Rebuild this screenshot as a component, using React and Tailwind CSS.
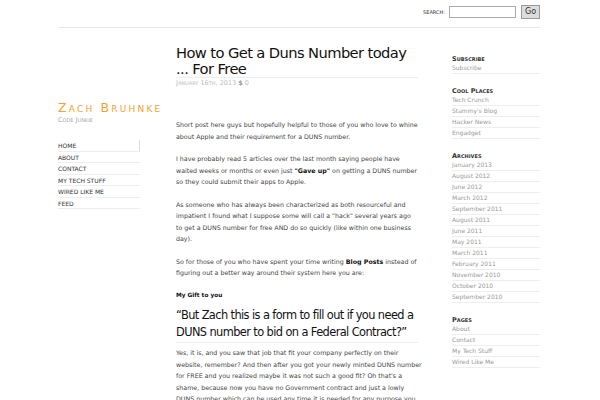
const SIDEBAR = [
  { title: 'Subscribe', items: ['Subscribe'] },
  { title: 'Cool Places', items: ['Tech Crunch', "Stammy's Blog", 'Hacker News', 'Engadget'] },
  {
    title: 'Archives',
    items: [
      'January 2013', 'August 2012', 'June 2012', 'March 2012', 'September 2011', 'August 2011',
      'June 2011', 'May 2011', 'March 2011', 'February 2011', 'November 2010', 'October 2010', 'September 2010',
    ],
  },
  { title: 'Pages', items: ['About', 'Contact', 'My Tech Stuff', 'Wired Like Me'] },
]

const NAV = ['Home', 'About', 'Contact', 'My Tech Stuff', 'Wired Like Me', 'Feed']

export default function App() {
  return (
    <div className="min-h-screen bg-white font-['DejaVu_Sans',sans-serif] text-[#444]">
      <div className="ml-[58px] w-[482px]">
        <header className="flex h-[28px] items-start justify-end border-b border-[#e6e6e6] pt-[5px]">
          <div className="flex items-center">
            <span className="mr-[4px] mt-[1px] text-[5px] uppercase text-[#333]">Search:</span>
            <input className="h-[12px] w-[67px] border border-[#aaa] bg-white" />
            <button className="ml-[5px] flex h-[14px] w-[19px] items-center justify-center border border-[#999] bg-[#dcdcdc] text-[8px] text-[#333]">Go</button>
          </div>
        </header>

        <div className="flex">
          <aside className="w-[82px] shrink-0 pt-[73px]">
            <div className="whitespace-nowrap text-[12.5px] leading-[14px] tracking-[2.2px] text-[#f7a133] [font-variant:small-caps]">Zach Bruhnke</div>
            <div className="mt-[1px] whitespace-nowrap text-[6.5px] leading-[8px] text-[#aaa] [font-variant:small-caps]">Code Junkie</div>
            <ul className="mt-[16px]">
              {NAV.map((item, i) => (
                <li key={item} className={`h-[11.5px] whitespace-nowrap border-b border-[#eee] text-[6px] leading-[11px] uppercase text-[#333] ${i === 0 ? 'border-r border-r-[#ddd]' : ''}`}>{item}</li>
              ))}
            </ul>
          </aside>

          <main className="ml-[36px] w-[246px] shrink-0 pt-[17px]">
            <h1 className="w-[242px] border-b border-[#eee] text-[14.7px] leading-[16px] tracking-[-0.6px] text-[#111]">How to Get a Duns Number today ... For Free</h1>
            <div className="mt-[1px] text-[6.5px] leading-[8px] text-[#bbb] [font-variant:small-caps]">
              January 16th, 2013 <span className="font-bold text-[#999]">$</span> 0
            </div>

            <div className="mt-[32px] text-[6.3px] leading-[11.5px]">
              <p className="mb-[11px]">Short post here guys but hopefully helpful to those of you who love to whine about Apple and their requirement for a DUNS number.</p>
              <p className="mb-[11px]">I have probably read 5 articles over the last month saying people have waited weeks or months or even just <b className="text-[#111]">"Gave up"</b> on getting a DUNS number so they could submit their apps to Apple.</p>
              <p className="mb-[11px] w-[243px]">As someone who has always been characterized as both resourceful and impatient I found what I suppose some will call a "hack" several years ago to get a DUNS number for free AND do so quickly (like within one business day).</p>
              <p className="mb-[11px]">So for those of you who have spent your time writing <b className="text-[#111]">Blog Posts</b> instead of figuring out a better way around their system here you are:</p>
              <p className="mb-[6px] text-[5.8px] font-bold text-[#111]">My Gift to you</p>
              <h2 className="mb-[4px] w-[242px] border-b border-[#eee] pb-[1px] text-[11.4px] leading-[17px] tracking-[-0.6px] text-[#111]">“But Zach this is a form to fill out if you need a DUNS number to bid on a Federal Contract?”</h2>
              <p>Yes, it is, and you saw that job that fit your company perfectly on their website, remember? And then after you got your newly minted DUNS number for FREE and you realized maybe it was not such a good fit? Oh that's a shame, because now you have no Government contract and just a lowly DUNS number which can be used any time it is needed for any purpose you like, including the Apple Developer Program.</p>
            </div>
          </main>

          <aside className="ml-[30px] w-[88px] shrink-0 pt-[27px]">
            {SIDEBAR.map((section) => (
              <div key={section.title} className="mb-[13px]">
                <h3 className="h-[8px] text-[6.5px] font-semibold leading-[8px] text-[#333] [font-variant:small-caps]">{section.title}</h3>
                <ul>
                  {section.items.map((item) => (
                    <li key={item} className="h-[11px] border-b border-[#eee] text-[6px] leading-[10px] text-[#999]">{item}</li>
                  ))}
                </ul>
              </div>
            ))}
          </aside>
        </div>
      </div>
    </div>
  )
}
